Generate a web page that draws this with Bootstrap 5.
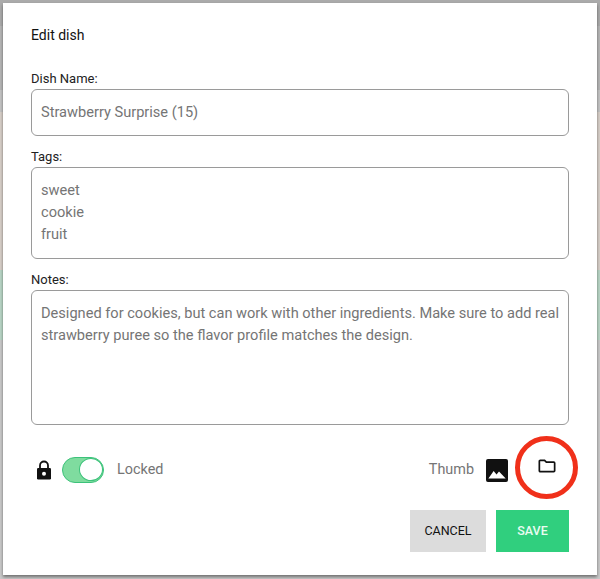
<!DOCTYPE html>
<html lang="en">
<head>
<meta charset="utf-8">
<title>Edit dish</title>
<link href="https://cdn.jsdelivr.net/npm/bootstrap@5.3.0/dist/css/bootstrap.min.css" rel="stylesheet">
<style>
html, body { height: 579px; overflow: hidden; }
body {
  font-family: Roboto, "Liberation Sans", sans-serif;
  padding: 3px 3px 4px;
  background:
    linear-gradient(to bottom,
      #ababab 0, #ababab 26px, #b6b6b6 26px, #b6b6b6 90px, #c4c4c4 90px, #c4c4c4 112px,
      #d8cfc8 112px, #d8cfc8 270px, #b9d6c6 270px, #b9d6c6 340px, #c9c9c9 340px, #c9c9c9 579px);
}
.dish-dialog {
  height: 572px;
  background: #fff;
  padding: 23px 28px 0;
  box-shadow: 0 2px 3px rgba(0,0,0,.45);
}
.dish-title { font-size: 14px; line-height: 18px; color: #111; margin: 0 0 27px; font-weight: 400; }
.dish-label { display: block; font-size: 13px; line-height: 16px; color: #222; margin: 0 0 2px; }
.dish-field {
  display: block; width: 100%;
  border: 1px solid #9a9a9a; border-radius: 6px;
  padding: 11px 4px 13px 9px; margin-bottom: 13px;
  font-size: 14.6px; line-height: 22px; color: #757575;
  resize: none; background: #fff; outline: 0; box-shadow: none;
}
.dish-field:focus { border-color: #9a9a9a; box-shadow: none; color: #757575; }
.dish-name { height: 47px; }
.dish-tags { height: 92px; }
.dish-notes { height: 135px; margin-bottom: 0; }
.dish-options { height: 42px; margin-top: 24px; padding: 0 0 0 5px; color: #757575; font-size: 14.4px; }
.lock-icon { margin-right: 10px; }
.toggle-track {
  width: 42px; height: 26px; border-radius: 13px;
  background: #7fdc9f; border: 1.5px solid #3cc27a;
  display: flex; justify-content: flex-end;
}
.toggle-thumb { width: 24px; height: 23px; border-radius: 50%; background: #fff; border: 1.5px solid #3cc27a; }
.lock-text { margin-left: 13px; }
.thumb-icon { margin: 0 7px 0 12px; }
.folder-ring {
  width: 63px; height: 63px; margin: 0 -9px 5px 0;
  border: 5px solid #f0301a; border-radius: 50%; flex: none;
}
.folder-icon { margin-bottom: 3px; }
.dish-actions { margin-top: 19px; gap: 10px; }
.dish-btn {
  height: 42px; border: 0; border-radius: 0; font-size: 12.5px; line-height: 42px; padding: 0;
  font-family: Roboto, "Liberation Sans", sans-serif;
}
.dish-cancel { width: 76px; background: #dcdcdc; color: #111; }
.dish-save { width: 73px; background: #30cf7e; color: #e9fbf1; font-weight: 500; }
.dish-cancel:hover { background: #dcdcdc; color: #111; }
.dish-save:hover { background: #30cf7e; color: #e9fbf1; }
</style>
</head>
<body>
<div class="dish-dialog">
  <h5 class="dish-title">Edit dish</h5>
  <label class="dish-label" for="n">Dish Name:</label>
  <input id="n" class="dish-field dish-name" value="Strawberry Surprise (15)">
  <label class="dish-label" for="t">Tags:</label>
  <textarea id="t" class="dish-field dish-tags">sweet
cookie
fruit</textarea>
  <label class="dish-label" for="o">Notes:</label>
  <textarea id="o" class="dish-field dish-notes">Designed for cookies, but can work with other ingredients. Make sure to add real strawberry puree so the flavor profile matches the design.</textarea>

  <div class="dish-options d-flex align-items-center">
    <svg width="16" height="20" viewBox="0 0 16 20" class="lock-icon" aria-hidden="true">
      <path d="M4 9V5.5a4 4 0 0 1 8 0V9" fill="none" stroke="#111" stroke-width="1.8"/>
      <rect x="1" y="8" width="14" height="11.5" rx="1.2" fill="#111"/>
      <circle cx="8" cy="13.7" r="2" fill="#fff"/>
    </svg>
    <div class="toggle-track"><div class="toggle-thumb"></div></div>
    <span class="lock-text">Locked</span>
    <span class="ms-auto">Thumb</span>
    <svg width="22" height="23" viewBox="0 0 23 23" preserveAspectRatio="none" class="thumb-icon" aria-hidden="true">
      <rect width="23" height="23" rx="2" fill="#111"/>
      <path d="M2.5 19.5 8 12l3 3.6 2.6-3.1 7 7z" fill="#fff"/>
    </svg>
    <div class="folder-ring d-flex align-items-center justify-content-center">
      <svg width="18" height="14" viewBox="0 0 20 16" preserveAspectRatio="none" class="folder-icon" aria-hidden="true">
        <path d="M1.5 2.5a1 1 0 0 1 1-1h4.8l2 2h8.2a1 1 0 0 1 1 1v9a1 1 0 0 1-1 1h-15a1 1 0 0 1-1-1z" fill="none" stroke="#111" stroke-width="1.9"/>
      </svg>
    </div>
  </div>

  <div class="dish-actions d-flex justify-content-end">
    <button type="button" class="btn dish-btn dish-cancel">CANCEL</button>
    <button type="button" class="btn dish-btn dish-save">SAVE</button>
  </div>
</div>
<script src="https://cdn.jsdelivr.net/npm/bootstrap@5.3.0/dist/js/bootstrap.bundle.min.js"></script>
</body>
</html>
